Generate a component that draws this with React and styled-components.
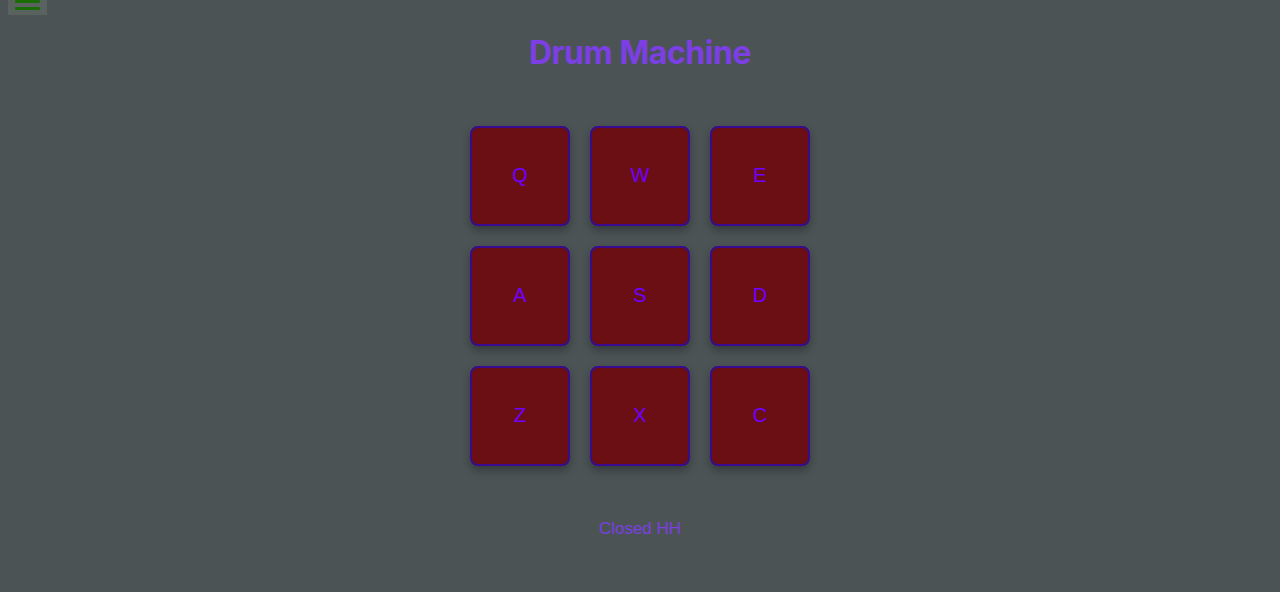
import React, { useState } from "react";
import styled, { createGlobalStyle } from "styled-components";

const Global = createGlobalStyle`
  html, body { margin: 0; padding: 0; background: #4b5354; }
  body { font-family: "Liberation Sans", Arial, sans-serif; min-height: 592px; }
`;

const Page = styled.div`
  position: relative;
  display: flex;
  flex-direction: column;
  align-items: center;
  padding-top: 33px;
`;

const MenuButton = styled.button`
  position: absolute;
  top: 0;
  left: 8px;
  width: 39px;
  height: 15px;
  padding: 0;
  border: none;
  background: #5a625f;
  overflow: hidden;
`;

const Bar = styled.span`
  position: absolute;
  left: 7px;
  width: 25px;
  height: 3px;
  border-radius: 1px;
  background: #1a6c04;
  top: ${(p) => p.$top}px;
`;

const Title = styled.h1`
  margin: 0;
  font-family: Inter, "Liberation Sans", sans-serif;
  font-weight: 700;
  font-size: 32px;
  line-height: 39px;
  letter-spacing: -0.45px;
  color: #7b3fe4;
`;

const Grid = styled.div`
  margin-top: 54px;
  display: grid;
  grid-template-columns: repeat(3, 100px);
  gap: 20px;
`;

const Pad = styled.button`
  width: 100px;
  height: 100px;
  box-sizing: border-box;
  border: 2px solid #3a0b8f;
  border-radius: 8px;
  background: #6b0f14;
  color: #7000ff;
  font-family: "Liberation Sans", Arial, sans-serif;
  font-size: 20px;
  box-shadow: 0 4px 8px rgba(0, 0, 0, 0.3);
  cursor: pointer;
  padding: 0 0 1px;
`;

const Display = styled.p`
  margin: 53px 0 0;
  font-family: "Liberation Sans", Arial, sans-serif;
  font-size: 17px;
  line-height: 19px;
  color: #7b3fe4;
`;

const pads = [
  { key: "Q", name: "Heater 1" },
  { key: "W", name: "Heater 2" },
  { key: "E", name: "Heater 3" },
  { key: "A", name: "Heater 4" },
  { key: "S", name: "Clap" },
  { key: "D", name: "Open HH" },
  { key: "Z", name: "Kick n' Hat" },
  { key: "X", name: "Kick" },
  { key: "C", name: "Closed HH" },
];

export default function App() {
  const [display, setDisplay] = useState("Closed HH");
  return (
    <>
      <Global />
      <Page>
        <MenuButton aria-label="menu">
          <Bar $top={0} />
          <Bar $top={7} />
        </MenuButton>
        <Title>Drum Machine</Title>
        <Grid>
          {pads.map((p) => (
            <Pad key={p.key} onClick={() => setDisplay(p.name)}>
              {p.key}
            </Pad>
          ))}
        </Grid>
        <Display>{display}</Display>
      </Page>
    </>
  );
}
